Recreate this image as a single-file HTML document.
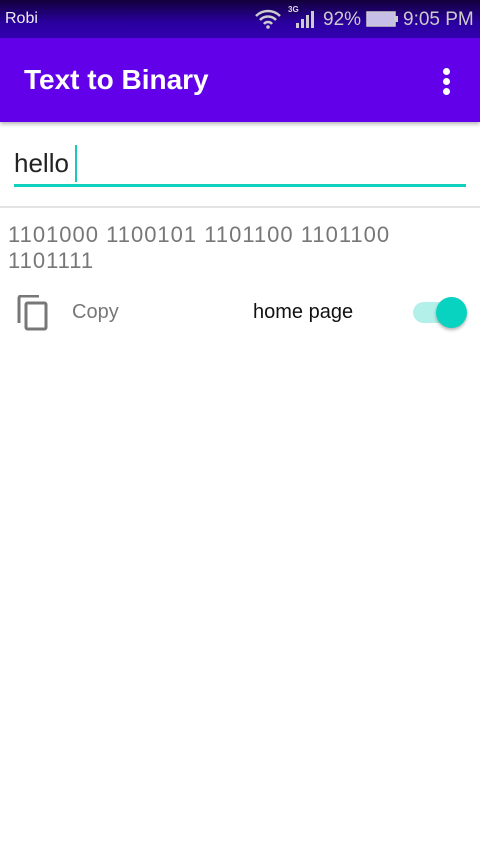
<!DOCTYPE html>
<html><head><meta charset="utf-8"><style>
*{margin:0;padding:0;box-sizing:border-box}
body{width:480px;height:854px;background:#fff;font-family:"Liberation Sans",sans-serif;position:relative;overflow:hidden}
.sb{position:absolute;top:0;left:0;width:480px;height:38px;background:linear-gradient(#12003a,#2a00a0 60%,#3300b0)}
.ab{position:absolute;top:38px;left:0;width:480px;height:84px;background:#6200ea;box-shadow:0 2px 4px rgba(0,0,0,.3)}
.t{position:absolute;color:#fff}
</style></head><body>
<div class="sb">
<div class="t" style="left:5px;top:10px;font-size:16px;color:#eee">Robi</div>
<svg style="position:absolute;left:254px;top:9px" width="28" height="20" viewBox="0 0 28 20"><path d="M2 7a17 17 0 0 1 24 0M6 11a11 11 0 0 1 16 0M10 15a5 5 0 0 1 8 0" stroke="#ccc" stroke-width="2.5" fill="none"/><circle cx="14" cy="18" r="1.8" fill="#ccc"/></svg>
<div class="t" style="left:288px;top:5px;font-size:8px;font-weight:bold;color:#ddd">3G</div>
<svg style="position:absolute;left:296px;top:10px" width="22" height="18"><rect x="0" y="13" width="3" height="5" fill="#ccc"/><rect x="5" y="9" width="3" height="9" fill="#ccc"/><rect x="10" y="5" width="3" height="13" fill="#ccc"/><rect x="15" y="1" width="3" height="17" fill="#ccc"/></svg>
<div class="t" style="left:323px;top:9px;font-size:19px;color:#ccc">92%</div>
<svg style="position:absolute;left:366px;top:11px" width="33" height="16"><rect x="1" y="1" width="28" height="14" fill="#c8bfe8" stroke="#ccc" stroke-width="1.5"/><rect x="29" y="5" width="3" height="6" fill="#ccc"/></svg>
<div class="t" style="left:403px;top:9px;font-size:19px;color:#ccc">9:05 PM</div>
</div>
<div class="ab">
<div class="t" style="left:24px;top:26px;font-size:28px;font-weight:bold">Text to Binary</div>
<div style="position:absolute;left:443px;top:30px;width:7px"><div style="width:7px;height:7px;border-radius:50%;background:#fff;margin-bottom:3px"></div><div style="width:7px;height:7px;border-radius:50%;background:#fff;margin-bottom:3px"></div><div style="width:7px;height:7px;border-radius:50%;background:#fff"></div></div>
</div>
<div style="position:absolute;left:14px;top:148px;font-size:26px;color:#222">hello</div>
<div style="position:absolute;left:75px;top:145px;width:2px;height:37px;background:#1bc8b8"></div>
<div style="position:absolute;left:14px;top:184px;width:452px;height:3px;background:#10d0bf"></div>
<div style="position:absolute;left:0;top:206px;width:480px;height:2px;background:#e4e4e4"></div>
<div style="position:absolute;left:8px;top:222px;font-size:22px;color:#777;line-height:26px;letter-spacing:1px">1101000 1100101 1101100 1101100<br>1101111</div>
<svg style="position:absolute;left:17px;top:295px" width="32" height="36" viewBox="0 0 32 36"><path d="M2 28V3a2 2 0 0 1 2-2h18" stroke="#777" stroke-width="3" fill="none"/><rect x="9" y="8" width="20" height="26" rx="1.5" stroke="#777" stroke-width="3" fill="none"/></svg>
<div style="position:absolute;left:72px;top:301px;font-size:20px;color:#777">Copy</div>
<div style="position:absolute;left:253px;top:301px;font-size:20px;color:#111">home page</div>
<div style="position:absolute;left:413px;top:302px;width:50px;height:21px;border-radius:11px;background:#b3f0e9"></div>
<div style="position:absolute;left:436px;top:297px;width:31px;height:31px;border-radius:50%;background:#08d2c0;box-shadow:0 2px 3px rgba(0,0,0,.3)"></div>
</body></html>
